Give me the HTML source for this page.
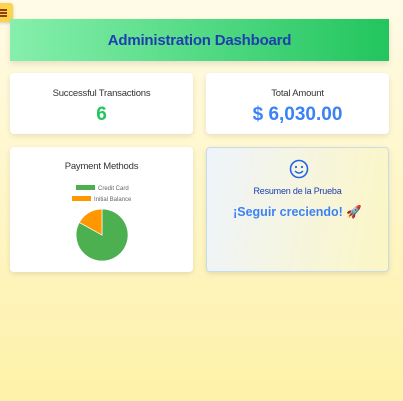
<!DOCTYPE html>
<html><head><style>
body{margin:0;width:403px;height:401px;overflow:hidden;background:linear-gradient(180deg,#fffbe6 0%,#fef1a8 100%);font-family:"Liberation Sans",sans-serif;position:relative}
.tog{position:absolute;left:-4px;top:3px;width:17px;height:19px;background:#fcd34d;border-radius:3px;box-shadow:0 1px 3px rgba(0,0,0,.2)}
.tog i{position:absolute;left:4px;width:7px;height:1.5px;background:#92400e}
.hdr{position:absolute;left:10px;top:19px;width:379px;height:42px;background:linear-gradient(90deg,#86efac,#22c55e);box-shadow:0 3px 6px rgba(0,0,0,.1);display:flex;align-items:center;justify-content:center;color:#1e40af;font-weight:bold;font-size:15px;letter-spacing:-0.2px}
.card{position:absolute;background:#fff;border-radius:4px;box-shadow:0 2px 6px rgba(0,0,0,.1);text-align:center}
.lbl{font-size:9.5px;color:#333;margin-top:15px;letter-spacing:-0.2px}
.val{font-weight:bold;font-size:19px;margin-top:5px}
</style></head><body>
<div class="tog"><i style="top:6px"></i><i style="top:9px"></i><i style="top:12px"></i></div>
<div class="hdr">Administration Dashboard</div>
<div class="card" style="left:10px;top:73px;width:183px;height:61px"><div class="lbl">Successful Transactions</div><div class="val" style="color:#22c55e">6</div></div>
<div class="card" style="left:206px;top:73px;width:183px;height:61px"><div class="lbl">Total Amount</div><div class="val" style="color:#3b82f6">$ 6,030.00</div></div>
<div class="card" style="left:10px;top:147px;width:183px;height:125px">
<div style="font-size:9.5px;color:#333;margin-top:14px;letter-spacing:-0.2px">Payment Methods</div>
<svg width="183" height="100" style="position:absolute;left:0;top:25px">
<rect x="66" y="13" width="19" height="5" fill="#4caf50"/><text x="88" y="18" font-size="6" fill="#666" font-family="Liberation Sans">Credit Card</text>
<rect x="62" y="24" width="19" height="5" fill="#ff9800"/><text x="84" y="29" font-size="6" fill="#666" font-family="Liberation Sans">Initial Balance</text>
<path d="M92 63 L92 37 A26 26 0 1 1 69.3 50.4 Z" fill="#4caf50" stroke="#fff" stroke-width="0.7"/>
<path d="M92 63 L69.3 50.4 A26 26 0 0 1 92 37 Z" fill="#ff9800" stroke="#fff" stroke-width="0.7"/>
</svg></div>
<div class="card" style="left:206px;top:147px;width:183px;height:125px;background:linear-gradient(100deg,#eef4fb,#fcf6c4);border:1px solid #c7dbe8;box-sizing:border-box">
<svg width="20" height="20" style="position:absolute;left:82px;top:11px" viewBox="0 0 20 20"><circle cx="10" cy="10" r="8.5" fill="none" stroke="#2563eb" stroke-width="1.6"/><circle cx="7" cy="8" r="1.1" fill="#2563eb"/><circle cx="13" cy="8" r="1.1" fill="#2563eb"/><path d="M6 12 Q10 16 14 12" fill="none" stroke="#2563eb" stroke-width="1.5"/></svg>
<div style="position:absolute;top:38px;width:100%;font-size:9px;color:#1e40af;letter-spacing:-0.2px">Resumen de la Prueba</div>
<div style="position:absolute;top:57px;width:100%;font-size:12.5px;font-weight:bold;color:#3b82f6">¡Seguir creciendo! 🚀</div>
</div>
</body></html>
